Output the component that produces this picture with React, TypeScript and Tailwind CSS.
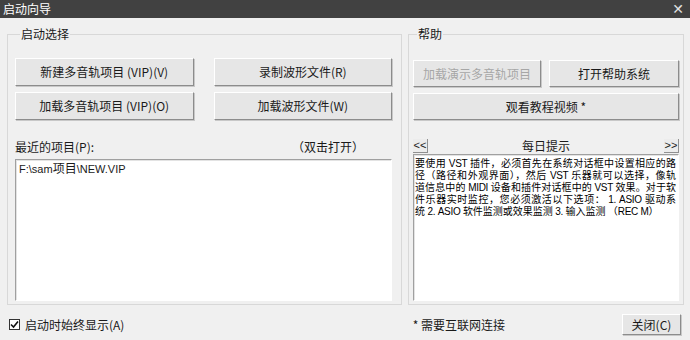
import React from "react";

const font = "font-['Microsoft_YaHei','Noto_Sans_CJK_SC','Noto_Sans',sans-serif]";

const Btn = ({
  children,
  disabled,
  className = "",
}: {
  children: React.ReactNode;
  disabled?: boolean;
  className?: string;
}) => (
  <button
    className={`flex items-center justify-center bg-[#e6e6e6] border border-t-white border-l-white border-b-[#8c8c8c] border-r-[#8c8c8c] shadow-[1px_1px_0_#c8c8c8] text-[12px] leading-none ${
      disabled ? "text-[#a6a6a6]" : "text-[#1a1a1a]"
    } ${className}`}
  >
    {children}
  </button>
);

const Sunken = ({ children, className = "" }: { children?: React.ReactNode; className?: string }) => (
  <div
    className={`bg-white border border-t-[#a0a0a0] border-l-[#a0a0a0] border-b-white border-r-white shadow-[inset_1px_1px_0_#e3e3e3] ${className}`}
  >
    {children}
  </div>
);

const Lat = ({ children }: { children: React.ReactNode }) => (
  <span className="font-['Liberation_Sans',sans-serif] text-[10px] tracking-[-0.3px]">{children}</span>
);

// tip lines, broken where the original box breaks them
const tip: React.ReactNode[] = [
  <>要使用<Lat> VST </Lat>插件，必须首先在系统对话框中设置相应的路</>,
  <>径（路径和外观界面），然后<Lat> VST </Lat>乐器就可以选择，像轨</>,
  <>道信息中的<Lat> MIDI </Lat>设备和插件对话框中的<Lat> VST </Lat>效果。对于软</>,
  <>件乐器实时监控，您必须激活以下选项：<Lat> 1. ASIO </Lat>驱动系</>,
  <>统<Lat> 2. ASIO </Lat>软件监测或效果监测<Lat> 3. </Lat>输入监测 （<Lat>REC M</Lat>）</>,
];

export default function App() {
  return (
    <div className={`w-[690px] h-[340px] bg-[#f0f0f0] text-[12px] text-[#1a1a1a] ${font} flex flex-col`}>
      <div className="h-[18px] bg-[#414141] text-white flex items-center justify-between pl-[3px] pr-[6px]">
        <span className="text-[12px] leading-none">启动向导</span>
        <span className="text-[14px] leading-none font-['DejaVu_Sans',sans-serif] text-[#e0e0e0]">✕</span>
      </div>

      <div className="flex gap-[6px] px-[7px] pt-[8px]">
        <fieldset className="w-[395px] min-w-0 shrink-0 h-[279px] border border-[#d8d8d8] pl-[7px] pr-[9px] pt-[16px]">
          <legend className="ml-[5px] px-[1px] leading-[16px]">启动选择</legend>
          <div className="grid grid-cols-2 gap-x-[20px] gap-y-[6px]">
            <Btn className="h-[28px]">新建多音轨项目 (VIP)(V)</Btn>
            <Btn className="h-[28px]">录制波形文件(R)</Btn>
            <Btn className="h-[28px]">加载多音轨项目 (VIP)(O)</Btn>
            <Btn className="h-[28px]">加载波形文件(W)</Btn>
          </div>
          <div className="flex justify-between mt-[20px] h-[14px] items-center pr-[28px]">
            <span>最近的项目(P):</span>
            <span>（双击打开）</span>
          </div>
          <Sunken className="mt-[5px] h-[142px] px-[3px] pt-[1px]">
            <div className="leading-[14px] font-['Liberation_Sans','Noto_Sans_CJK_SC',sans-serif] text-[11px]">
              F:\sam<span className="font-['Noto_Sans_CJK_SC',sans-serif] text-[12px]">项目</span>\NEW.VIP
            </div>
          </Sunken>
        </fieldset>

        <fieldset className="w-[276px] min-w-0 shrink-0 h-[279px] border border-[#d8d8d8] pl-[4px] pr-[4px] pt-[18px]">
          <legend className="ml-[4px] px-[1px] leading-[16px]">帮助</legend>
          <div className="grid grid-cols-[128px_1fr] gap-x-[8px] gap-y-[6px]">
            <Btn disabled className="h-[27px]">加载演示多音轨项目</Btn>
            <Btn className="h-[27px]">打开帮助系统</Btn>
            <Btn className="h-[27px] col-span-2">观看教程视频 *</Btn>
          </div>
          <div className="flex items-center justify-between mt-[19px] h-[14px]">
            <span className="w-[15px] h-[14px] flex items-center justify-center bg-[#ececec] border-b border-r border-[#909090] text-[11px] leading-none font-['Liberation_Sans',sans-serif]">&lt;&lt;</span>
            <span>每日提示</span>
            <span className="w-[15px] h-[14px] flex items-center justify-center bg-[#ececec] border-b border-r border-[#909090] text-[11px] leading-none font-['Liberation_Sans',sans-serif]">&gt;&gt;</span>
          </div>
          <Sunken className="mt-[1px] h-[147px] pl-[1px] pr-[2px] pt-[2px]">
            {tip.map((line, i) => (
              <div
                key={i}
                className={`whitespace-nowrap leading-[12px] h-[12px] text-[10px] text-black font-['Noto_Sans_CJK_SC',sans-serif] ${
                  i < tip.length - 1 ? "text-justify [text-align-last:justify]" : ""
                }`}
              >
                {line}
              </div>
            ))}
          </Sunken>
        </fieldset>
      </div>

      <div className="flex items-center mt-[9px] pl-[9px] pr-[9px] h-[21px]">
        <span className="w-[11px] h-[11px] bg-white border border-[#333] flex items-center justify-center">
          <svg width="9" height="9" viewBox="0 0 9 9">
            <path d="M1 4.5 L3.5 7 L8 1.5" stroke="#111" strokeWidth="1.6" fill="none" />
          </svg>
        </span>
        <span className="ml-[5px]">启动时始终显示(A)</span>
        <span className="ml-auto mr-[117px]">* 需要互联网连接</span>
        <Btn className="w-[59px] h-[21px]">关闭(C)</Btn>
      </div>
    </div>
  );
}
